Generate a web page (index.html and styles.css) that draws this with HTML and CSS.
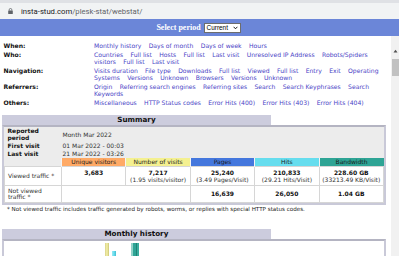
FILE: index.html
```html
<!DOCTYPE html>
<html lang="en">
<head>
    <meta charset="UTF-8">
    <title>Statistics for insta-stud.com</title>
    <link rel="stylesheet" href="styles.css">
</head>
<body>
    <div class="urlbar">
        <svg class="lock" width="5" height="6" viewBox="0 0 5 6">
            <path d="M1.2 2.6V1.8a1.3 1.3 0 0 1 2.6 0v0.8" fill="none" stroke="#5f6368" stroke-width="0.8"/>
            <rect x="0.2" y="2.5" width="4.6" height="3.5" rx="0.5" fill="#5f6368"/>
        </svg>
        <span class="host">insta-stud.com</span><span class="path">/plesk-stat/webstat/</span>
    </div>
    <div class="periodbar">
        <b>Select period</b>
        <span class="select">Current
            <svg width="5" height="4" viewBox="0 0 5 4"><path d="M0.6 0.8L2.5 2.8L4.4 0.8" fill="none" stroke="#000" stroke-width="0.9"/></svg>
        </span>
    </div>

    <div class="page">
        <div class="menu">
            <div class="label">When:</div>
            <div class="links"><a href="#">Monthly history</a> <a href="#">Days of month</a> <a href="#">Days of week</a> <a href="#">Hours</a></div>
            <div class="label">Who:</div>
            <div class="links"><a href="#">Countries</a> <a href="#">Full list</a> <a href="#">Hosts</a> <a href="#">Full list</a> <a href="#">Last visit</a> <a href="#">Unresolved IP Address</a> <a href="#">Robots/Spiders visitors</a> <a href="#">Full list</a> <a href="#">Last visit</a></div>
            <div class="label">Navigation:</div>
            <div class="links"><a href="#">Visits duration</a> <a href="#">File type</a> <a href="#">Downloads</a> <a href="#">Full list</a> <a href="#">Viewed</a> <a href="#">Full list</a> <a href="#">Entry</a> <a href="#">Exit</a> <a href="#">Operating Systems</a> <a href="#">Versions</a> <a href="#">Unknown</a> <a href="#">Browsers</a> <a href="#">Versions</a> <a href="#">Unknown</a></div>
            <div class="label">Referrers:</div>
            <div class="links"><a href="#">Origin</a> <a href="#">Referring search engines</a> <a href="#">Referring sites</a> <a href="#">Search</a> <a href="#">Search Keyphrases</a> <a href="#">Search Keywords</a></div>
            <div class="label">Others:</div>
            <div class="links"><a href="#">Miscellaneous</a> <a href="#">HTTP Status codes</a> <a href="#">Error Hits (400)</a> <a href="#">Error Hits (403)</a> <a href="#">Error Hits (404)</a></div>
        </div>

        <div class="section summary">
            <div class="sec-title">Summary</div>
            <div class="sec-body">
                <table class="data">
                    <colgroup><col class="first"><col><col><col><col><col></colgroup>
                    <tr class="info">
                        <td class="name">Reported period</td>
                        <td class="val" colspan="5">Month Mar 2022</td>
                    </tr>
                    <tr class="info">
                        <td class="name">First visit</td>
                        <td class="val" colspan="5">01 Mar 2022 - 00:03</td>
                    </tr>
                    <tr class="info">
                        <td class="name">Last visit</td>
                        <td class="val" colspan="5">21 Mar 2022 - 03:26</td>
                    </tr>
                    <tr class="heads">
                        <td></td>
                        <td class="c-u">Unique visitors</td>
                        <td class="c-v">Number of visits</td>
                        <td class="c-p">Pages</td>
                        <td class="c-h">Hits</td>
                        <td class="c-k">Bandwidth</td>
                    </tr>
                    <tr class="nums viewed">
                        <td class="rowname">Viewed traffic *</td>
                        <td><b>3,683</b><br>&nbsp;</td>
                        <td><b>7,217</b><br>(1.95 visits/visitor)</td>
                        <td><b>25,240</b><br>(3.49 Pages/Visit)</td>
                        <td><b>210,833</b><br>(29.21 Hits/Visit)</td>
                        <td><b>228.60 GB</b><br>(33213.49 KB/Visit)</td>
                    </tr>
                    <tr class="nums notviewed">
                        <td class="rowname">Not viewed traffic *</td>
                        <td colspan="2"></td>
                        <td><b>16,639</b></td>
                        <td><b>26,050</b></td>
                        <td><b>1.04 GB</b></td>
                    </tr>
                </table>
            </div>
        </div>
        <div class="note">* Not viewed traffic includes traffic generated by robots, worms, or replies with special HTTP status codes.</div>

        <div class="section history">
            <div class="sec-title">Monthly history</div>
            <div class="sec-body chart">
                <span class="bar bar-v"></span>
                <span class="bar bar-h"></span>
                <span class="bar bar-k"></span>
            </div>
        </div>
    </div>

    <div class="scrollbar">
        <svg class="arrow" width="5" height="4" viewBox="0 0 5 4"><path d="M0.5 3.5L2.5 0.8L4.5 3.5Z" fill="#505050"/></svg>
        <span class="thumb"></span>
    </div>
</body>
</html>
```

FILE: styles.css
```css
body {
    margin: 0;
    background: #fff;
    color: #000;
    font-family: "DejaVu Sans", Verdana, sans-serif;
    overflow: hidden;
}
.urlbar {
    height: 16px;
    border-top: 3px solid #dfe1e5;
    background: #f1f3f4;
    display: flex;
    align-items: center;
    padding-left: 8px;
    font-family: Roboto, "Liberation Sans", sans-serif;
    font-size: 7.7px;
}
.lock {
    margin-right: 8px;
}
.host {
    color: #202124;
}
.path {
    color: #5f6368;
}
.periodbar {
    height: 17px;
    background: #6b86d8;
    display: flex;
    align-items: center;
    justify-content: center;
    gap: 3px;
    padding-right: 2px;
}
.periodbar b {
    font-family: "Liberation Serif", serif;
    font-size: 8px;
    color: #fff;
}
.select {
    width: 37px;
    height: 10px;
    box-sizing: border-box;
    background: #fff;
    border: 1px solid #6d6d6d;
    display: flex;
    align-items: center;
    justify-content: space-between;
    padding: 0 1.5px 0 2px;
    font-family: "Liberation Sans", Arial, sans-serif;
    font-size: 6.4px;
    color: #000;
}
.page {
    padding: 0 13px 0 2px;
}
.menu {
    margin-top: 6.2px;
    padding-left: 1.5px;
    display: grid;
    grid-template-columns: 90.5px 289px;
    row-gap: 1px;
    font-size: 6.1px;
    line-height: 7.5px;
}
.menu .label {
    font-weight: bold;
    color: #111;
}
.links a {
    color: #4a44c6;
    text-decoration: none;
    margin-right: 5.4px;
}
.section {
    width: 384px;
}
.summary {
    margin-top: 8.4px;
}
.sec-title {
    width: 70%;
    height: 10px;
    line-height: 10.5px;
    background: #ccccdd;
    text-align: center;
    font-weight: bold;
    font-size: 7.2px;
    color: #111;
}
.sec-body {
    border: 2px solid #c9c9d8;
    border-top: 2px solid #b4b4c2;
    background: #ececec;
}
.data {
    width: 100%;
    border-collapse: collapse;
    table-layout: fixed;
    font-size: 6px;
    line-height: 7.5px;
}
.data col.first {
    width: 57px;
}
.data td {
    padding: 0;
}
.info td {
    padding: 0.2px 0;
    vertical-align: middle;
}
.info .name {
    font-weight: bold;
    padding-left: 3px;
    padding-right: 14px;
    color: #111;
}
.info .val {
    padding-left: 1px;
    color: #333;
}
.heads td {
    height: 8.5px;
    line-height: 8.5px;
    text-align: center;
    color: #1a1a1a;
    border-left: 1px solid #f4f4f4;
}
.heads td:first-child {
    border-left: none;
}
.c-u { background: #ffaa66; }
.c-v { background: #f4f090; }
.c-p { background: #4477dd; }
.c-h { background: #66ddee; }
.c-k { background: #2ea495; }
.nums td {
    background: #fff;
    border: 1px solid #d6d6d6;
    text-align: center;
    color: #333;
    line-height: 7.5px;
}
.nums b {
    color: #111;
}
.nums .rowname {
    text-align: left;
    padding-left: 3px;
    padding-right: 6px;
}
.viewed td {
    height: 18px;
}
.notviewed td {
    height: 16px;
}
.notviewed .rowname {
    line-height: 6.5px;
}
.note {
    margin-top: 1px;
    padding-left: 5px;
    font-size: 5.6px;
    line-height: 7px;
    color: #222;
}
.history {
    margin-top: 16px;
}
.chart {
    background: #fff;
    height: 40px;
    padding: 2px 0 0 101px;
    display: flex;
    align-items: flex-end;
}
.bar {
    display: block;
    width: 4px;
}
.bar-v {
    height: 40px;
    background: linear-gradient(90deg, #d8d28a, #f4f0a8, #cbc574);
}
.bar-h {
    height: 32px;
    margin-left: 3px;
    background: linear-gradient(90deg, #9be9f3, #66ddee, #44bdd0);
}
.bar-k {
    width: 8px;
    height: 40px;
    margin-left: 15px;
    background: linear-gradient(90deg, #8fd2c8 0 25%, #2ea495 25% 60%, #1d8275 60% 75%, #39ad9e 75%);
}
.scrollbar {
    position: fixed;
    top: 36px;
    right: 0;
    bottom: 0;
    width: 8px;
    background: #f1f1f1;
    display: flex;
    flex-direction: column;
    align-items: center;
}
.scrollbar .arrow {
    margin-top: 13px;
}
.scrollbar .thumb {
    display: block;
    width: 7px;
    height: 17px;
    margin-top: 6px;
    background: #c1c1c1;
}
```
